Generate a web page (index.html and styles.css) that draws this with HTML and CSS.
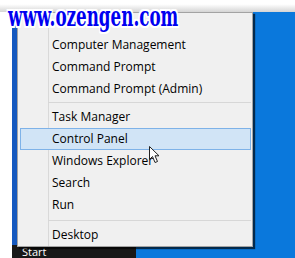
FILE: index.html
```html
<!DOCTYPE html>
<html lang="en">
<head>
    <meta charset="UTF-8">
    <title>Win+X Menu</title>
    <link rel="stylesheet" href="styles.css">
</head>
<body>
<div class="screen">
    <div class="top-band"></div>
    <div class="main">
        <div class="margin-white"></div>
        <div class="desktop">
            <div class="desktop-area">
                <div class="edge"></div>
                <ul class="menu">
                    <li>Computer Management</li>
                    <li>Command Prompt</li>
                    <li>Command Prompt (Admin)</li>
                    <li class="sep"></li>
                    <li>Task Manager</li>
                    <li class="active">Control Panel</li>
                    <li>Windows Explorer</li>
                    <li>Search</li>
                    <li>Run</li>
                    <li class="sep sep-low"></li>
                    <li>Desktop</li>
                </ul>
            </div>
            <div class="taskbar"><span class="start">Start</span></div>
        </div>
    </div>

    <!-- watermark + mouse pointer sit on top of everything -->
    <div class="watermark">www.ozengen.com</div>
    <svg class="cursor" width="13" height="18" viewBox="0 0 13 18">
        <path d="M0.5 0.5 L0.5 13.5 L3.5 10.5 L6 16.5 L8.5 15.5 L6 9.8 L10 9.8 Z" fill="#fff" stroke="#222" stroke-width="1" stroke-linejoin="miter"/>
    </svg>
</div>
</body>
</html>
```

FILE: styles.css
```css
body {
    margin: 0;
    background-color: #fff;
}
.screen {
    width: 295px;
    height: 258px;
    position: relative;
    overflow: hidden;
    display: flex;
    flex-direction: column;
}
.top-band {
    height: 12px;
    background: linear-gradient(#fff 35%, #d4d4d4);
}
.main {
    flex: 1;
    display: flex;
}
.margin-white {
    width: 12px;
    background-color: #fff;
}
.desktop {
    flex: 1;
    display: flex;
    flex-direction: column;
    background-color: #0a78dc;
}
.desktop-area {
    height: 233px;
    display: flex;
    align-items: flex-start;
}
.edge {
    width: 5px;
    align-self: stretch;
    background-color: #1559bf;
}

/* context menu */
.menu {
    position: relative;
    z-index: 1;
    list-style: none;
    margin: 0;
    padding: 21px 0 0 0;
    width: 234px;
    border: 1px solid #a3a3a3;
    background: linear-gradient(to right, transparent 30px, #d9d9d9 30px, #d9d9d9 31px, transparent 31px), #f0f0f0;
    box-shadow: 2px 2px 1px rgba(0, 0, 0, 0.65);
    font-family: "Open Sans", "Noto Sans", sans-serif;
    font-size: 12px;
    color: #000;
}
.menu li {
    height: 22px;
    line-height: 22px;
    padding-left: 34px;
    white-space: nowrap;
}
.menu li.sep {
    height: 6px;
    padding: 0;
    margin: 0 1px 0 30px;
    background: linear-gradient(transparent 2px, #d7d7d7 2px, #d7d7d7 3px, transparent 3px);
}
.menu li.sep-low {
    height: 8px;
    background: linear-gradient(transparent 4px, #d7d7d7 4px, #d7d7d7 5px, transparent 5px);
}
.menu li.active {
    height: 20px;
    line-height: 20px;
    margin: 0 1px 0 2px;
    padding-left: 31px;
    border: 1px solid #7eb2e8;
    background-color: #d1e4f6;
}

.taskbar {
    width: 124px;
    height: 13px;
    background-color: #181818;
    overflow: hidden;
}
.start {
    display: block;
    padding: 1px 0 0 10px;
    color: #fff;
    font-family: "Open Sans", "Noto Sans", sans-serif;
    font-size: 11px;
    line-height: 12px;
}

.watermark {
    position: absolute;
    z-index: 2;
    left: 8px;
    top: 2px;
    font-family: "DejaVu Serif", serif;
    font-weight: bold;
    font-size: 27px;
    line-height: 30px;
    color: #0000f0;
    white-space: nowrap;
    transform: scaleX(0.62);
    transform-origin: left top;
    text-shadow: 2px 0 0 #fff, -2px 0 0 #fff, 0 2px 0 #fff, 0 -2px 0 #fff,
        2px 2px 0 #fff, -2px -2px 0 #fff, 2px -2px 0 #fff, -2px 2px 0 #fff,
        0 0 3px #fff;
}
.cursor {
    position: absolute;
    z-index: 2;
    left: 149px;
    top: 146px;
}
```
